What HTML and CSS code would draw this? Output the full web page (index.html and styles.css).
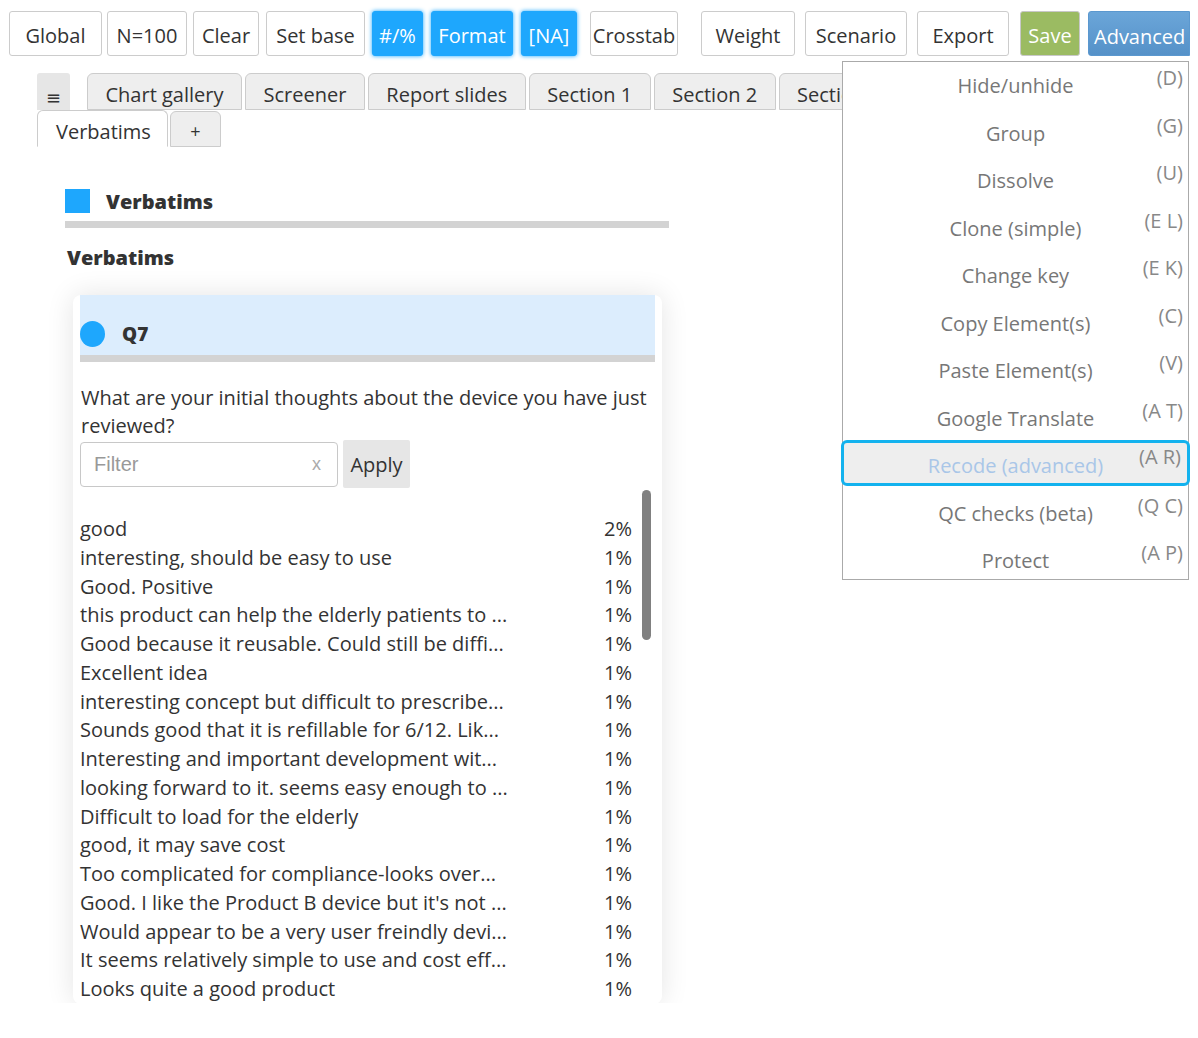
FILE: index.html
```html
<!DOCTYPE html>
<html>
<head>
<meta charset="utf-8">
<link rel="stylesheet" href="styles.css">
</head>
<body>
<div class="app">
  <div class="toolbar">
    <button class="btn b-global">Global</button>
    <button class="btn b-n">N=100</button>
    <button class="btn b-clear">Clear</button>
    <button class="btn b-setbase">Set base</button>
    <button class="btn btn-on b-pct">#/%</button>
    <button class="btn btn-on b-format">Format</button>
    <button class="btn btn-on b-na">[NA]</button>
    <button class="btn b-crosstab">Crosstab</button>
    <button class="btn b-weight">Weight</button>
    <button class="btn b-scenario">Scenario</button>
    <button class="btn b-export">Export</button>
    <button class="btn btn-save b-save">Save</button>
    <button class="btn btn-adv b-adv">Advanced</button>
  </div>

  <div class="main">
    <div class="tabrow">
      <div class="tab-menu">≡</div>
      <div class="tab">Chart gallery</div>
      <div class="tab">Screener</div>
      <div class="tab">Report slides</div>
      <div class="tab">Section 1</div>
      <div class="tab">Section 2</div>
      <div class="tab">Section 3</div>
      <div class="tab">Section 4</div>
    </div>
    <div class="tabrow tabrow2">
      <div class="tab tab-active">Verbatims</div>
      <div class="tab tab-plus">+</div>
    </div>

    <div class="content">
      <div class="section-head">
        <span class="sq"></span>
        <span class="section-title">Verbatims</span>
      </div>
      <div class="section-bar"></div>
      <div class="sub-title">Verbatims</div>

      <div class="card">
        <div class="card-head">
          <span class="dot"></span>
          <span class="qname">Q7</span>
        </div>
        <div class="card-bar"></div>
        <div class="question">What are your initial thoughts about the device you have just reviewed?</div>
        <div class="filter-row">
          <div class="filter">
            <span class="ph">Filter</span>
            <span class="clear-x">x</span>
          </div>
          <button class="apply">Apply</button>
        </div>
        <div class="list-wrap">
          <div class="scrollbar"></div>
          <div class="list">
            <div class="row"><span>good</span><span>2%</span></div>
            <div class="row"><span>interesting, should be easy to use</span><span>1%</span></div>
            <div class="row"><span>Good. Positive</span><span>1%</span></div>
            <div class="row"><span>this product can help the elderly patients to ...</span><span>1%</span></div>
            <div class="row"><span>Good because it reusable. Could still be diffi...</span><span>1%</span></div>
            <div class="row"><span>Excellent idea</span><span>1%</span></div>
            <div class="row"><span>interesting concept but difficult to prescribe...</span><span>1%</span></div>
            <div class="row"><span>Sounds good that it is refillable for 6/12. Lik...</span><span>1%</span></div>
            <div class="row"><span>Interesting and important development wit...</span><span>1%</span></div>
            <div class="row"><span>looking forward to it. seems easy enough to ...</span><span>1%</span></div>
            <div class="row"><span>Difficult to load for the elderly</span><span>1%</span></div>
            <div class="row"><span>good, it may save cost</span><span>1%</span></div>
            <div class="row"><span>Too complicated for compliance-looks over...</span><span>1%</span></div>
            <div class="row"><span>Good. I like the Product B device but it's not ...</span><span>1%</span></div>
            <div class="row"><span>Would appear to be a very user freindly devi...</span><span>1%</span></div>
            <div class="row"><span>It seems relatively simple to use and cost eff...</span><span>1%</span></div>
            <div class="row"><span>Looks quite a good product</span><span>1%</span></div>
          </div>
        </div>
      </div>
    </div>
  </div>

  <div class="menu">
    <div class="mi"><span class="ml">Hide/unhide</span><span class="ks">(D)</span></div>
    <div class="mi"><span class="ml">Group</span><span class="ks">(G)</span></div>
    <div class="mi"><span class="ml">Dissolve</span><span class="ks">(U)</span></div>
    <div class="mi"><span class="ml">Clone (simple)</span><span class="ks">(E L)</span></div>
    <div class="mi"><span class="ml">Change key</span><span class="ks">(E K)</span></div>
    <div class="mi"><span class="ml">Copy Element(s)</span><span class="ks">(C)</span></div>
    <div class="mi"><span class="ml">Paste Element(s)</span><span class="ks">(V)</span></div>
    <div class="mi"><span class="ml">Google Translate</span><span class="ks">(A T)</span></div>
    <div class="mi mi-hl"><span class="ml">Recode (advanced)</span><span class="ks">(A R)</span></div>
    <div class="mi"><span class="ml">QC checks (beta)</span><span class="ks">(Q C)</span></div>
    <div class="mi"><span class="ml">Protect</span><span class="ks">(A P)</span></div>
  </div>
</div>
</body>
</html>
```

FILE: styles.css
```css
* { box-sizing: border-box; }
html, body { margin: 0; padding: 0; background: #fff; }
body {
  font-family: "Open Sans", "DejaVu Sans", sans-serif;
  font-size: 20px;
  color: #333;
}
.app {
  position: relative;
  height: 1003px;
  overflow: hidden;
}

/* toolbar */
.toolbar {
  display: flex;
  padding: 11px 0 0 9px;
  height: 56px;
}
.btn {
  font-family: "Open Sans", sans-serif;
  font-size: 20px;
  color: #333;
  background: #fff;
  border: 1px solid #ccc;
  border-radius: 3px;
  height: 45px;
  padding: 4px 0 0;
  line-height: 27px;
  text-align: center;
  flex: none;
}
.btn-on {
  background: #1ea7fd;
  border-color: #1ea7fd;
  color: #fff;
  box-shadow: 0 0 4px #1ea7fd;
}
.btn-save { background: #9bbb62; color: #fff; border-color: #c8c8c8; }
.btn-adv {
  background: linear-gradient(#6ba6d9, #5591c8);
  border-color: #5b98cf;
  color: #fff;
  border-radius: 3px 0 0 3px;
  text-align: left;
  padding-left: 5px;
  padding-top: 6px;
}
.b-global { width: 93px; }
.b-n { width: 80px; margin-left: 5px; }
.b-clear { width: 66px; margin-left: 6px; }
.b-setbase { width: 99px; margin-left: 7px; }
.b-pct { width: 51px; margin-left: 7px; }
.b-format { width: 82px; margin-left: 8px; }
.b-na { width: 56px; margin-left: 8px; }
.b-crosstab { width: 88px; margin-left: 13px; }
.b-weight { width: 94px; margin-left: 23px; }
.b-scenario { width: 102px; margin-left: 10px; }
.b-export { width: 92px; margin-left: 10px; }
.b-save { width: 60px; margin-left: 11px; }
.b-adv { width: 102px; margin-left: 8px; }

/* main area */
.main {
  margin-left: 36px;
  height: 947px;
  overflow: hidden;
  padding-top: 17px;
}
.tabrow {
  display: flex;
  align-items: flex-end;
  gap: 3px;
  padding-left: 1px;
  white-space: nowrap;
}
.tab-menu {
  width: 33px;
  height: 37px;
  background: #e6e6e6;
  border-radius: 3px 3px 0 0;
  text-align: center;
  font-size: 18px;
  line-height: 22px;
  padding-top: 13px;
  color: #333;
  margin-right: 14px;
}
.tab {
  height: 37px;
  padding: 7px 17.5px 0;
  line-height: 27px;
  background: #eee;
  border: 1px solid #ccc;
  border-radius: 6px 6px 0 0;
  flex: none;
}
.tabrow2 { gap: 2px; }
.tab-active { background: #fff; border-bottom-color: #fff; width: 131px; padding-left: 18px; }
.tab-plus { width: 51px; height: 36px; text-align: center; padding: 6px 0 0; font-size: 18px; }

.content { padding-left: 29px; }
.section-head {
  display: flex;
  align-items: center;
  margin-top: 41px;
  height: 26px;
}
.sq {
  width: 25px;
  height: 24px;
  background: #1ea7fd;
  flex: none;
}
.section-title {
  font-weight: 800;
  font-size: 20px;
  margin-left: 16px;
  color: #333;
}
.section-bar {
  width: 604px;
  height: 7px;
  background: #d3d3d3;
  margin-top: 7px;
}
.sub-title {
  font-weight: 800;
  font-size: 20px;
  margin-left: 2px;
  margin-top: 17px;
  line-height: 26px;
}

/* card */
.card {
  width: 589px;
  margin-left: 8px;
  margin-top: 24px;
  padding: 0 7px;
  background: #fff;
  border-radius: 8px;
  box-shadow: 0 0 28px rgba(0,0,0,0.11);
}
.card-head {
  background: #dcedfd;
  height: 60px;
  display: flex;
  align-items: center;
  padding-top: 18px;
}
.dot {
  width: 25px;
  height: 26px;
  border-radius: 50%;
  background: #1ea7fd;
  flex: none;
}
.qname {
  font-weight: 800;
  font-size: 19px;
  margin-left: 17px;
}
.card-bar { height: 7px; background: #d3d3d3; }
.question {
  margin-top: 22px;
  line-height: 28px;
  padding-left: 1px;
}
.filter-row {
  display: flex;
  align-items: flex-end;
  gap: 5px;
}
.filter {
  width: 258px;
  height: 45px;
  border: 1px solid #c8c8c8;
  border-radius: 4px;
  display: flex;
  align-items: center;
  justify-content: space-between;
  padding: 0 16px 0 13px;
  font-family: "Liberation Sans", Arial, sans-serif;
  color: #999;
}
.ph { font-size: 20px; }
.clear-x { font-size: 18px; color: #aaa; }
.apply {
  height: 48px;
  width: 67px;
  background: #e6e6e6;
  border: none;
  border-radius: 2px;
  font-family: "Open Sans", sans-serif;
  font-size: 20px;
  color: #333;
  padding: 0;
  margin-bottom: -1px;
}

.list-wrap {
  position: relative;
  margin-top: 3px;
  padding-top: 25px;
}
.scrollbar {
  position: absolute;
  right: 4px;
  top: 0;
  width: 9px;
  height: 150px;
  border-radius: 5px;
  background: #808080;
}
.list { width: 552px; }
.row {
  display: flex;
  justify-content: space-between;
  height: 28.75px;
  line-height: 28px;
  white-space: nowrap;
}

/* dropdown */
.menu {
  position: absolute;
  left: 842px;
  top: 61px;
  width: 347px;
  height: 519px;
  background: #fff;
  border: 1px solid #aaa;
}
.mi {
  position: relative;
  height: 47.5px;
  line-height: 47px;
  text-align: center;
  color: #777;
}
.ks {
  position: absolute;
  right: 5px;
  top: -8px;
  color: #888;
}
.mi-hl {
  background: #eee;
  border: 3px solid #13b2ee;
  border-radius: 6px;
  margin: -2px -2px 0 -2px;
  line-height: 46px;
  height: 46px;
}
.mi-hl .ml { color: #a9c6e8; }
.mi-hl .ks { top: -9px; right: 6px; }
.mi-hl + .mi { margin-top: 3.5px; }
```
